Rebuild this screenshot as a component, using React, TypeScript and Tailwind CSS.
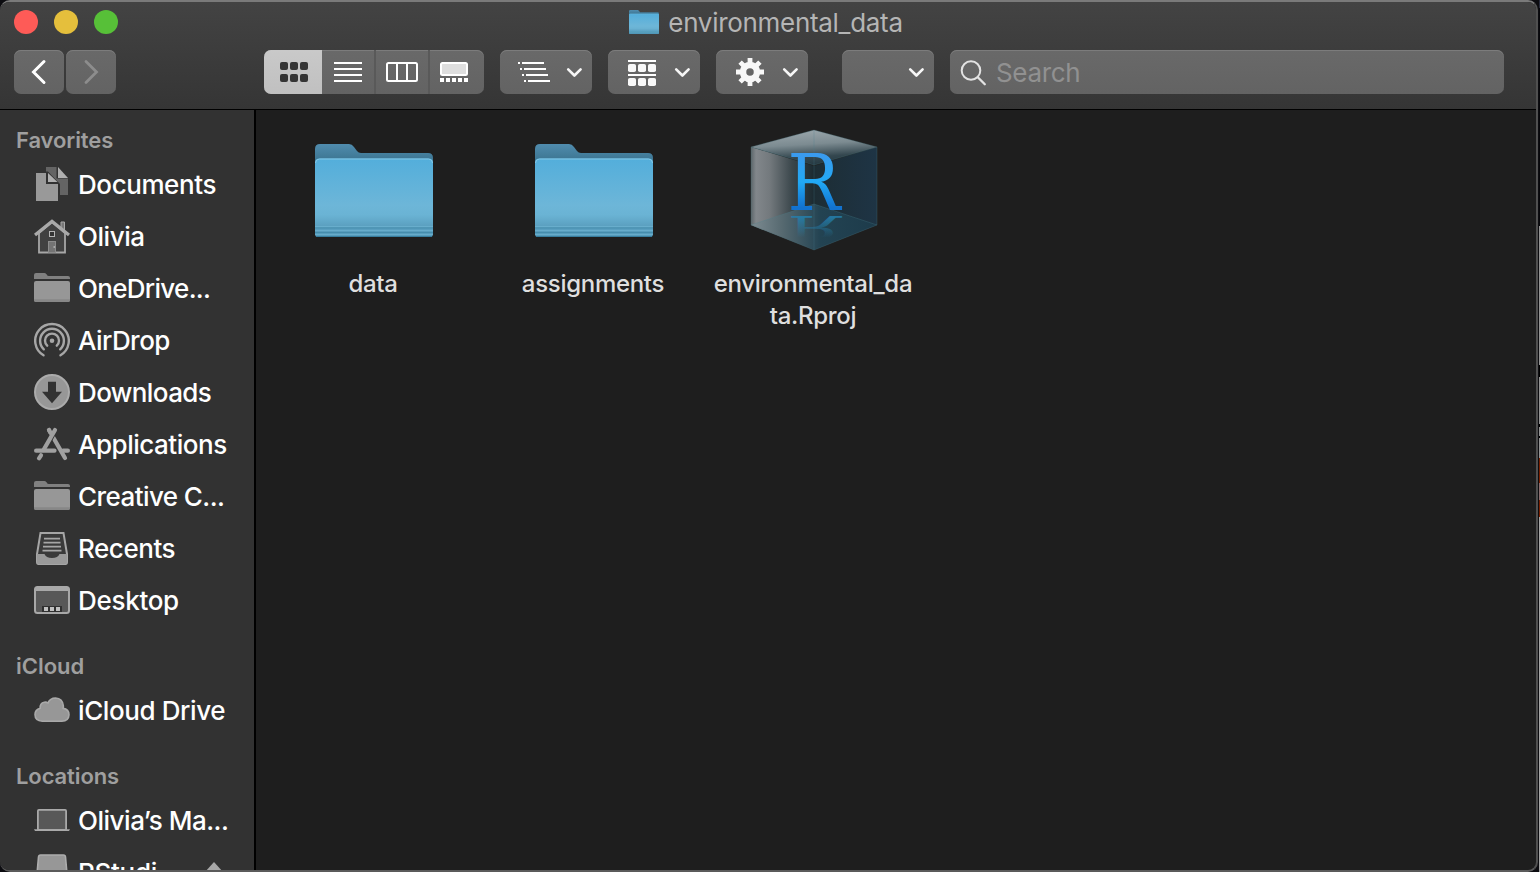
import React from "react";

const SANS = "font-['Inter','Liberation_Sans',sans-serif]";

function Glyph({ children }: { children: React.ReactNode }) {
  return (
    <svg width="36" height="52" viewBox="0 0 36 52" className="shrink-0" fill="none">
      {children}
    </svg>
  );
}

function DocumentsIcon() {
  return (
    <Glyph>
      <path d="M12 8H22.5V19.5H34V36H26V25L14 12.5H12Z" fill="#646464" />
      <path d="M24 8L34 19H24Z" fill="#b0b0b0" />
      <path d="M2 14H12V25H24V42H2Z" fill="#999999" />
      <path d="M14 14L23.5 23H14Z" fill="#b0b0b0" />
    </Glyph>
  );
}

function HomeIcon() {
  return (
    <Glyph>
      <path d="M27 18V11H30.5V20Z" fill="#777" stroke="#a8a8a8" strokeWidth="1" />
      <path d="M5 22L18 11L31 22V41.5H5Z" fill="#414141" stroke="#a6a6a6" strokeWidth="1.8" />
      <path d="M1 24L18 10.400L35 24" stroke="#a9a9a9" strokeWidth="3.2" />
      <rect x="15.5" y="20.5" width="5" height="5" fill="#333" stroke="#b4b4b4" />
      <rect x="14.5" y="30.5" width="7" height="11" fill="#747474" stroke="#8c8c8c" />
      <rect x="19.5" y="35" width="1.5" height="2" fill="#aaa" />
    </Glyph>
  );
}

function FolderGlyph() {
  return (
    <Glyph>
      <path d="M0 16V12Q0 10 2 10H10.5Q12 10 12.7 11.5Q13.3 13 15 13H34Q36 13 36 15V16Z" fill="#808080" />
      <path d="M0 20Q0 18 2 18H34Q36 18 36 20V37Q36 39 34 39H2Q0 39 0 37Z" fill="#979797" />
      <path d="M0 36.2H36V37Q36 39 34 39H2Q0 39 0 37Z" fill="#878787" />
    </Glyph>
  );
}

function AirDropIcon() {
  return (
    <Glyph>
      <g stroke="#a6a6a6" strokeWidth="2.4" strokeLinecap="round">
        <path d="M9.5 40.3A16.8 16.8 0 1 1 26.5 40.3" />
        <path d="M9.800 34.300A11.900 11.900 0 1 1 26.200 34.300" />
        <path d="M13.200 30.700A7 7 0 1 1 22.800 30.700" />
      </g>
      <circle cx="18" cy="25.7" r="2.3" fill="#a6a6a6" />
    </Glyph>
  );
}

function DownloadsIcon() {
  return (
    <Glyph>
      <circle cx="18" cy="25" r="17" fill="#979797" stroke="#ababab" strokeWidth="2" />
      <path d="M14 14.7H22V24.8H28L18 36.3L8 24.8H14Z" fill="#323232" />
    </Glyph>
  );
}

function ApplicationsIcon() {
  return (
    <Glyph>
      <g stroke="#a0a0a0" strokeWidth="4.2" strokeLinecap="round">
        <path d="M2.1 31.7H20.5" />
        <path d="M29 31.7H33.9" />
        <path d="M15 11L31 39" />
        <path d="M7 36.3L5 39.3" />
      </g>
      <path d="M20 12.5L11.500 27.500" stroke="#323232" strokeWidth="6" />
      <path d="M21 11L9.5 31" stroke="#a0a0a0" strokeWidth="4.2" strokeLinecap="round" />
      <path d="M15 11L17 14.5" stroke="#a0a0a0" strokeWidth="4.2" strokeLinecap="round" />
    </Glyph>
  );
}

function RecentsIcon() {
  return (
    <Glyph>
      <path d="M6.5 10H29.5L33 31V39Q33 41 31.5 41H4.5Q3 41 3 39V31Z" fill="#3a3a3a" stroke="#a6a6a6" strokeWidth="2" />
      <path d="M3 31H10.5Q12 35 18 35Q24 35 25.500 31H33V39Q33 41 31.500 41H4.500Q3 41 3 39Z" fill="#9a9a9a" />
      <path d="M10 15.700H26M9.500 19.700H26.500M9 23.700H27M8.500 27.700H27.500" stroke="#a6a6a6" strokeWidth="1.700" />
    </Glyph>
  );
}

function DesktopIcon() {
  return (
    <Glyph>
      <rect x="1" y="12" width="34" height="26" rx="2.5" fill="#585858" stroke="#a8a8a8" strokeWidth="2" />
      <path d="M1 16V13.500Q1 12 3 12H33Q35 12 35 13.500V16Z" fill="#a8a8a8" />
      <rect x="8" y="31" width="20" height="6" fill="#303030" />
      <path d="M10 32H14V36H10ZM16 32H20V36H16ZM22 32H26V36H22Z" fill="#c0c0c0" />
    </Glyph>
  );
}

function CloudIcon() {
  return (
    <Glyph>
      <path
        d="M8.300 36.200Q1 35.800 1 29.500Q1 24.500 6.200 23.200Q5.800 18 10.300 17.200Q12.500 16.800 14 18Q16 13 21.500 13Q28.500 13.500 29.300 20.500Q29.500 22 29.100 23.400Q35 24.300 35 29.800Q34.800 36 27.800 36.200Z"
        fill="#979797"
        stroke="#a9a9a9"
        strokeWidth="1.600"
      />
    </Glyph>
  );
}

function LaptopIcon() {
  return (
    <Glyph>
      <rect x="3.900" y="14.900" width="28.200" height="20" rx="1" fill="#585858" stroke="#a9a9a9" strokeWidth="1.800" />
      <path d="M0 34.300H36L35 36H1Z" fill="#a9a9a9" />
    </Glyph>
  );
}

function DriveIcon() {
  return (
    <Glyph>
      <path d="M4.500 10Q4.700 8 6.500 8H29.500Q31.300 8 31.500 10L33 27V40H3V27Z" fill="#979797" stroke="#adadad" strokeWidth="1.600" />
    </Glyph>
  );
}

function Item({ icon, label, tracking, eject }: { icon: React.ReactNode; label: string; tracking: string; eject?: boolean }) {
  return (
    <div className="flex h-[52px] items-center pl-[34px]">
      {icon}
      <span className={`ml-2 whitespace-nowrap text-[26px] font-medium leading-[52px] text-white ${tracking}`}>{label}</span>
      {eject && (
        <svg width="20" height="24" viewBox="0 0 20 24" className="ml-auto mr-[30px]">
          <path d="M10 1L19 11H1Z" fill="#a8a8a8" />
        </svg>
      )}
    </div>
  );
}

function Heading({ children, className }: { children: string; className: string }) {
  return <div className={`pl-4 text-[22px] font-semibold leading-7 text-[#9f9f9f] ${className}`}>{children}</div>;
}

function Chevron() {
  return (
    <svg width="18" height="12" viewBox="0 0 18 12" fill="none">
      <path d="M2.200 3.300L8.400 9.500L14.600 3.300" stroke="#f6f6f6" strokeWidth="2.600" strokeLinecap="round" strokeLinejoin="round" />
    </svg>
  );
}

const BUTTON =
  "flex h-11 shrink-0 items-center rounded-[7px] bg-gradient-to-b from-[#696969] to-[#636363] shadow-[inset_0_1px_0_#7c7c7c]";

function MenuButton({ children, className }: { children?: React.ReactNode; className: string }) {
  return (
    <div className={`${BUTTON} w-[92px] justify-between pr-2 ${className}`}>
      <svg width="40" height="44" viewBox="0 0 40 44" className="ml-3" fill="none">
        {children}
      </svg>
      <Chevron />
    </div>
  );
}

function FolderShape({ id }: { id: string }) {
  return (
    <>
      <defs>
        <linearGradient id={`${id}-front`} x1="0" y1="0" x2="0" y2="1">
          <stop offset="0" stopColor="#53aedb" />
          <stop offset=".6" stopColor="#6db6d8" />
          <stop offset=".72" stopColor="#6ab3d4" />
          <stop offset=".86" stopColor="#5ba0c0" />
          <stop offset="1" stopColor="#559bbc" />
        </linearGradient>
        <linearGradient id={`${id}-back`} x1="0" y1="0" x2="0" y2="1">
          <stop offset="0" stopColor="#508cae" />
          <stop offset="1" stopColor="#38708b" />
        </linearGradient>
      </defs>
      <path d="M0 20V5Q0 0 5 0H34Q37 0 39 3L42 7Q43.500 9 46 9H113Q118 9 118 14V20Z" fill={`url(#${id}-back)`} />
      <path d="M0 19Q0 14.500 4.500 14.500H113.500Q118 14.500 118 19V90Q118 93 115 93H3Q0 93 0 90Z" fill={`url(#${id}-front)`} />
      <path d="M.5 19Q.5 15 4.500 15H113.500Q117.500 15 117.500 19" stroke="#86c8e6" strokeWidth="1" fill="none" />
      <path d="M0 84H118M0 88.500H118" stroke="#418aa9" strokeOpacity=".8" strokeWidth="1" />
      <path d="M0 82.500H118M0 86.500H118M0 90.500H118" stroke="#6db3d2" strokeOpacity=".7" strokeWidth="1" />
      <path d="M1 92.500H117" stroke="#377d9d" strokeWidth="1" />
    </>
  );
}

function ProjectIcon() {
  return (
    <svg width="128" height="124" viewBox="0 0 128 124" className="mb-[1.5px] ml-[2.5px]">
      <defs>
        <linearGradient id="cube-left" x1="0" y1="0" x2="1" y2="0">
          <stop offset="0" stopColor="#5c666a" />
          <stop offset=".08" stopColor="#82878b" />
          <stop offset=".3" stopColor="#73797d" />
          <stop offset=".65" stopColor="#3b474c" />
          <stop offset="1" stopColor="#1b2a31" />
        </linearGradient>
        <linearGradient id="cube-right" x1="0" y1="0" x2="1" y2="0">
          <stop offset="0" stopColor="#1d2d34" />
          <stop offset="1" stopColor="#1e3445" />
        </linearGradient>
        <linearGradient id="cube-top" x1=".4" y1="0" x2=".62" y2="1">
          <stop offset="0" stopColor="#9aa6ab" />
          <stop offset=".4" stopColor="#7c8b91" />
          <stop offset=".75" stopColor="#34474f" />
          <stop offset="1" stopColor="#233740" />
        </linearGradient>
        <linearGradient id="cube-floor" x1="0" y1="0" x2="1" y2="0">
          <stop offset="0" stopColor="#7e8c92" />
          <stop offset=".25" stopColor="#566970" />
          <stop offset=".55" stopColor="#234352" />
          <stop offset="1" stopColor="#1d3b4b" />
        </linearGradient>
        <linearGradient id="letter" x1="0" y1="0" x2="0" y2="1">
          <stop offset="0.200" stopColor="#3a9bee" />
          <stop offset=".5" stopColor="#21a9f5" />
          <stop offset=".78" stopColor="#1272cf" />
        </linearGradient>
        <linearGradient id="mirror" x1="0" y1="0" x2="0" y2="1">
          <stop offset=".2" stopColor="#247fac" stopOpacity="0" />
          <stop offset=".75" stopColor="#247fac" stopOpacity=".85" />
        </linearGradient>
      </defs>
      <path d="M1 18L64 37V121L1 96Z" fill="url(#cube-left)" />
      <path d="M127 18L64 37V121L127 96Z" fill="url(#cube-right)" />
      <path d="M1 96L64 75L127 96L64 121Z" fill="url(#cube-floor)" />
      <path d="M64 1L127 18L64 36L1 18Z" fill="url(#cube-top)" />
      <path d="M64 1V121M1 18L64 36L127 18M1 96L64 75L127 96" stroke="#4a8590" strokeOpacity=".25" strokeWidth="1" fill="none" />
      <path d="M64 1L127 18V96L64 121L1 96V18Z" fill="none" stroke="#48727c" strokeOpacity=".3" strokeWidth="1" />
      <text
        x="0"
        y="0"
        transform="translate(37.5 80.500) scale(.9 1)"
        fontSize="78"
        fontFamily="'DejaVu Serif', serif"
        fill="url(#letter)"
      >
        R
      </text>
      <g transform="translate(37.500 87) scale(.9 -.4)">
        <text x="0" y="0" fontSize="78" fontFamily="'DejaVu Serif', serif" fill="url(#mirror)">
          R
        </text>
      </g>
    </svg>
  );
}

function File({ children, lines }: { children: React.ReactNode; lines: string[] }) {
  return (
    <div className="flex w-[220px] flex-col items-center">
      <div className="flex h-[134px] items-end justify-center">{children}</div>
      <div className="mt-[14px] text-center text-[24px] font-medium leading-8 tracking-[-0.3px] text-[#dfdfdf]">
        {lines.map((line) => (
          <div key={line} className="whitespace-nowrap">{line}</div>
        ))}
      </div>
    </div>
  );
}

export default function App() {
  return (
    <div className={`flex h-[872px] w-[1540px] overflow-hidden bg-[#0c0c10] ${SANS}`}>
      <div className="flex w-[1538px] shrink-0 flex-col overflow-hidden rounded-[10px] border-b-2 border-r-2 border-t-2 border-b-[#5b5b5b] border-r-[#505050] border-t-[#7a7a7a] bg-[#1e1e1e]">
        <header className="flex h-[108px] shrink-0 flex-col border-b border-black bg-gradient-to-b from-[#434343] to-[#353535]">
          <div className="grid h-12 grid-cols-[1fr_auto_1fr] items-start">
            <div className="flex gap-4 pl-[14px] pt-2">
              <span className="size-6 rounded-full bg-[#fe5b57]" />
              <span className="size-6 rounded-full bg-[#e5bf3c]" />
              <span className="size-6 rounded-full bg-[#57c038]" />
            </div>
            <div className="flex h-[42px] items-center pr-1">
              <svg width="30" height="24" viewBox="0 0 118 93" preserveAspectRatio="none" className="mb-0.5">
                <FolderShape id="title" />
              </svg>
              <span className="ml-[9px] text-[26px] leading-8 tracking-[-0.3px] text-[#b5b5b5]">environmental_data</span>
            </div>
            <div />
          </div>
          <div className="flex pl-[14px]">
            <div className={`${BUTTON} w-[50px] justify-center`}>
              <svg width="16" height="26" viewBox="0 0 16 26" fill="none">
                <path d="M13 2.500L2.500 13L13 23.500" stroke="#fff" strokeWidth="3" strokeLinecap="round" />
              </svg>
            </div>
            <div className={`${BUTTON} ml-0.5 w-[50px] justify-center`}>
              <svg width="16" height="26" viewBox="0 0 16 26" fill="none">
                <path d="M3 2.500L13.500 13L3 23.500" stroke="#8d8d8d" strokeWidth="2.800" strokeLinecap="round" />
              </svg>
            </div>
            <div className={`${BUTTON} ml-[148px] w-[220px] overflow-hidden`}>
              <div className="flex h-11 w-[58px] items-center justify-center bg-gradient-to-b from-[#c9c9c9] to-[#c0c0c0]">
                <svg width="28" height="20" viewBox="0 0 28 20" fill="#353535" className="ml-0.5">
                  <rect width="8" height="8" rx="2" />
                  <rect x="10" width="8" height="8" rx="2" />
                  <rect x="20" width="8" height="8" rx="2" />
                  <rect y="12" width="8" height="8" rx="2" />
                  <rect x="10" y="12" width="8" height="8" rx="2" />
                  <rect x="20" y="12" width="8" height="8" rx="2" />
                </svg>
              </div>
              <div className="flex h-11 w-[54px] items-center justify-center border-r-2 border-[#595959]">
                <svg width="28" height="20" viewBox="0 0 28 20">
                  <path d="M0 1H28M0 7H28M0 13H28M0 19H28" stroke="#fff" strokeWidth="2" />
                </svg>
              </div>
              <div className="flex h-11 w-[54px] items-center justify-center border-r-2 border-[#595959]">
                <svg width="32" height="20" viewBox="0 0 32 20" fill="none" stroke="#fff" strokeWidth="2">
                  <rect x="1" y="1" width="30" height="18" rx="1.500" />
                  <path d="M11 1V19M21 1V19" />
                </svg>
              </div>
              <div className="flex h-11 w-[54px] items-center pl-2.5">
                <svg width="28" height="20" viewBox="0 0 28 20">
                  <rect x="1" y="1" width="26" height="12" rx="1.500" fill="#dedede" stroke="#fff" strokeWidth="2" />
                  <path d="M0 18H28" stroke="#fff" strokeWidth="4" strokeDasharray="4 2" />
                </svg>
              </div>
            </div>
            <MenuButton className="ml-4">
              <g stroke="#fff" strokeWidth="2">
                <path d="M6 13H8M10 13H32M8 19H10M12 19H34M10 25H12M14 25H36M12 31H14M16 31H38" />
              </g>
            </MenuButton>
            <MenuButton className="ml-4">
              <path d="M8 11H36M8 25H36" stroke="#fff" strokeWidth="2" />
              <g fill="#f8f8f8">
                <rect x="8" y="14" width="8" height="8" rx="1.800" />
                <rect x="18" y="14" width="8" height="8" rx="1.800" />
                <rect x="28" y="14" width="8" height="8" rx="1.800" />
                <rect x="8" y="28" width="8" height="8" rx="1.800" />
                <rect x="18" y="28" width="8" height="8" rx="1.800" />
                <rect x="28" y="28" width="8" height="8" rx="1.800" />
              </g>
            </MenuButton>
            <MenuButton className="ml-4">
              <circle cx="22" cy="22" r="7" stroke="#f8f8f8" strokeWidth="6.500" />
              <path
                d="M22 8V14M22 30V36M8 22H14M30 22H36M12.100 12.100L16.300 16.300M27.700 27.700L31.900 31.900M31.900 12.100L27.700 16.300M16.300 27.700L12.100 31.900"
                stroke="#f8f8f8"
                strokeWidth="4.800"
              />
            </MenuButton>
            <MenuButton className="ml-[34px]" />
            <div className={`${BUTTON} ml-4 w-[554px] pl-2.5`}>
              <svg width="28" height="28" viewBox="0 0 28 28" fill="none" stroke="#e2e2e2" strokeWidth="2" strokeLinecap="round" className="mt-0.5">
                <circle cx="11" cy="11.500" r="9.300" />
                <path d="M17.800 18.300L24.800 25.300" strokeWidth="2.300" />
              </svg>
              <span className="ml-2 pt-0.5 text-[26px] leading-8 tracking-[-0.35px] text-[#919191]">Search</span>
            </div>
          </div>
        </header>
        <div className="flex min-h-0 flex-1">
          <aside className="w-[256px] shrink-0 overflow-hidden border-r-2 border-black bg-[#323232]">
            <Heading className="mt-4 tracking-[-0.1px]">Favorites</Heading>
            <div className="mt-[5px]">
              <Item icon={<DocumentsIcon />} label="Documents" tracking="tracking-[-0.42px]" />
              <Item icon={<HomeIcon />} label="Olivia" tracking="tracking-[-0.45px]" />
              <Item icon={<FolderGlyph />} label="OneDrive..." tracking="tracking-[-0.7px]" />
              <Item icon={<AirDropIcon />} label="AirDrop" tracking="tracking-[-0.55px]" />
              <Item icon={<DownloadsIcon />} label="Downloads" tracking="tracking-[-0.6px]" />
              <Item icon={<ApplicationsIcon />} label="Applications" tracking="tracking-[-0.48px]" />
              <Item icon={<FolderGlyph />} label="Creative C..." tracking="tracking-[-0.57px]" />
              <Item icon={<RecentsIcon />} label="Recents" tracking="tracking-[-0.45px]" />
              <Item icon={<DesktopIcon />} label="Desktop" tracking="tracking-[-0.3px]" />
            </div>
            <Heading className="mt-[25px] tracking-[0px]">iCloud</Heading>
            <div className="mt-[5px]">
              <Item icon={<CloudIcon />} label="iCloud Drive" tracking="tracking-[-0.4px]" />
            </div>
            <Heading className="mt-[25px] tracking-[-0.1px]">Locations</Heading>
            <div className="mt-[5px]">
              <Item icon={<LaptopIcon />} label="Olivia’s Ma..." tracking="tracking-[-0.48px]" />
              <Item icon={<DriveIcon />} label="RStudi" tracking="tracking-[-0.3px]" eject />
            </div>
          </aside>
          <main className="flex flex-1 items-start pl-[7px] pt-[10px]">
            <File lines={["data"]}>
              <svg width="118" height="93" viewBox="0 0 118 93" className="mb-[17.5px] ml-[2px]">
                <FolderShape id="data" />
              </svg>
            </File>
            <File lines={["assignments"]}>
              <svg width="118" height="93" viewBox="0 0 118 93" className="mb-[17.5px] ml-[2px]">
                <FolderShape id="assignments" />
              </svg>
            </File>
            <File lines={["environmental_da", "ta.Rproj"]}>
              <ProjectIcon />
            </File>
          </main>
        </div>
      </div>
      <div className="ml-px flex w-px flex-col">
        <div className="h-2 bg-[#292c3b]" />
        <div className="h-[218px] bg-[#08080b]" />
        <div className="h-[139px] bg-[#929292]" />
        <div className="h-3 bg-black" />
        <div className="h-[47px] bg-[#929292]" />
        <div className="h-[3px] bg-black" />
        <div className="h-[9px] bg-[#929292]" />
        <div className="h-0.5 bg-black" />
        <div className="h-5 bg-[#929292]" />
        <div className="h-[25px] bg-[#7b2000]" />
        <div className="h-[17px] bg-[#8a6d6d]" />
        <div className="h-[17px] bg-[#7b2000]" />
        <div className="flex-1 bg-[#a5a5a5]" />
      </div>
    </div>
  );
}
